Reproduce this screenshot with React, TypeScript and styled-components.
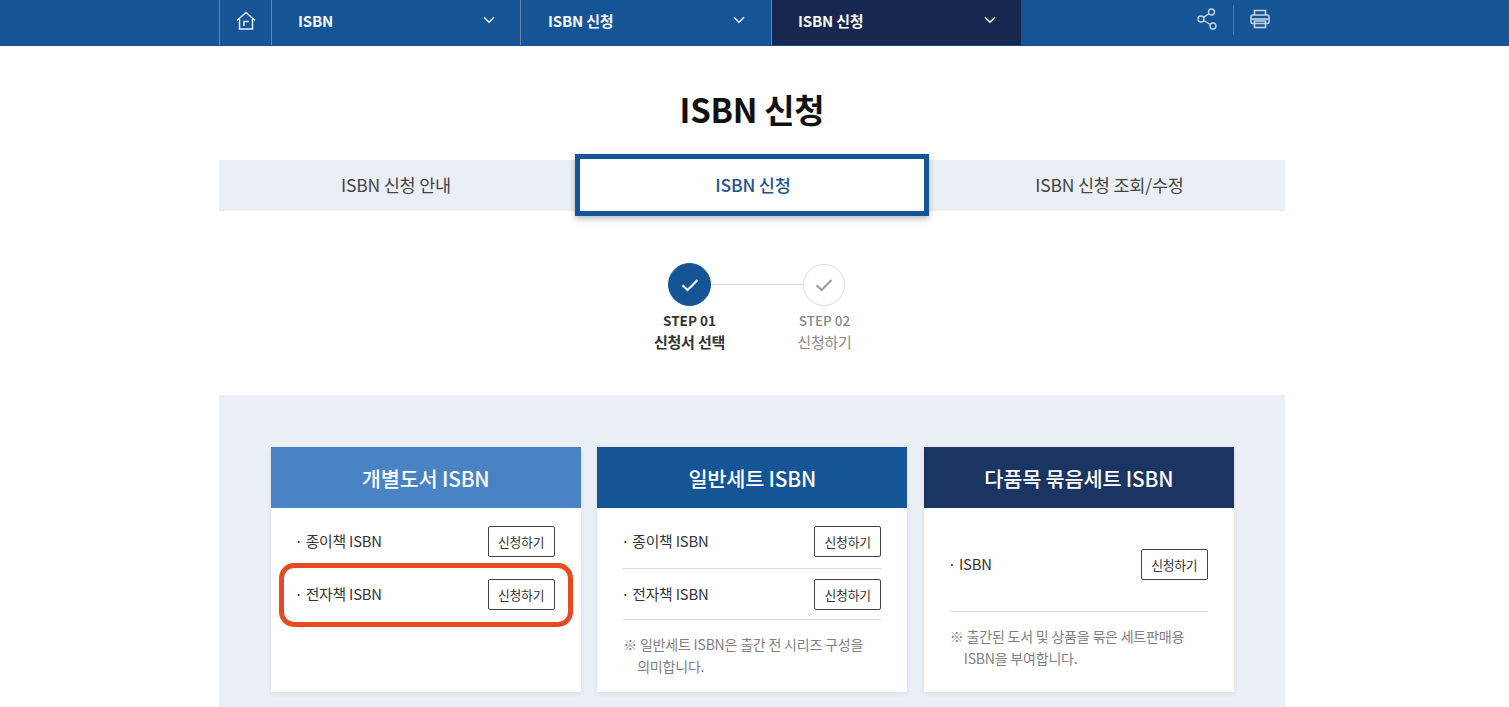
import React from "react";
import styled, { createGlobalStyle } from "styled-components";

const Global = createGlobalStyle`
  html, body { margin: 0; padding: 0; background: #fff; overflow: hidden; }
  body { font-family: "Noto Sans CJK KR", "Noto Sans", sans-serif; color: #333; }
  * { box-sizing: border-box; }
`;

const Page = styled.div`
  width: 1509px;
  height: 707px;
  overflow: hidden;
`;
const Nav = styled.header`
  height: 46px;
  background: #155596;
  border-bottom: 1px solid #14508e;
`;
const Wrap = styled.div`
  width: 1066px;
  margin-left: 219px;
`;
const NavInner = styled(Wrap)`
  display: flex;
  height: 45px;
`;
const HomeCell = styled.div`
  width: 53px;
  display: flex;
  align-items: center;
  justify-content: center;
  border-left: 1px solid #5f88b6;
  border-right: 1px solid #5f88b6;
  padding-bottom: 4px;
`;
const NavItem = styled.div<{ $dark?: boolean; $w: number; $pl?: number; $pr?: number }>`
  width: ${(p) => p.$w}px;
  display: flex;
  align-items: center;
  justify-content: space-between;
  padding: 0 ${(p) => p.$pr ?? 25}px 5px ${(p) => p.$pl ?? 26}px;
  font-size: 15px;
  font-weight: 700;
  color: #f4f7fb;
  letter-spacing: -0.2px;
  border-right: ${(p) => (p.$dark ? "none" : "1px solid #5f88b6")};
  background: ${(p) => (p.$dark ? "#17274f" : "transparent")};
`;
const NavChevron = styled.span`
  display: flex;
`;
const NavTools = styled.div`
  flex: 1;
  display: flex;
  align-items: flex-start;
  justify-content: flex-end;
  padding: 5px 15px 0 0;
`;
const ToolDivider = styled.span`
  width: 1px;
  height: 30px;
  margin: 0 16px 0 15px;
  background: #4a79ad;
`;
const Tool = styled.span`
  display: flex;
  height: 28px;
  align-items: center;
`;
const Title = styled.h1`
  margin: 0;
  padding-top: 40px;
  height: 114px;
  font-size: 33px;
  line-height: 46px;
  font-weight: 700;
  text-align: center;
  color: #111;
  letter-spacing: -0.3px;
`;
const Tabs = styled.nav`
  height: 51px;
  background: #eaeef5;
  display: grid;
  grid-template-columns: 356px 354px 356px;
  grid-template-rows: 51px;
`;
const Tab = styled.div<{ $active?: boolean; $pl?: number; $pr?: number }>`
  display: flex;
  align-items: center;
  justify-content: center;
  font-size: 17.5px;
  letter-spacing: -0.2px;
  padding: 0 ${(p) => p.$pr ?? 0}px 2px ${(p) => p.$pl ?? 0}px;
  color: ${(p) => (p.$active ? "#1c5593" : "#444")};
  font-weight: ${(p) => (p.$active ? 500 : 400)};
  ${(p) =>
    p.$active
      ? `background:#fff;border:5px solid #155596;height:62px;margin-top:-6px;box-shadow:0 3px 6px rgba(0,0,0,.25);position:relative;`
      : ""}
`;
const Stepper = styled.div`
  display: flex;
  justify-content: center;
  height: 184px;
  padding: 52px 0 0 10px;
`;
const Step = styled.div<{ $on?: boolean }>`
  width: 135px;
  display: flex;
  flex-direction: column;
  align-items: center;
  color: ${(p) => (p.$on ? "#333" : "#888")};
  position: relative;
`;
const StepLine = styled.span`
  position: absolute;
  left: 67px;
  top: 21px;
  width: 135px;
  height: 1px;
  background: #ddd;
`;
const Circle = styled.span<{ $on?: boolean }>`
  width: ${(p) => (p.$on ? 43 : 42)}px;
  height: ${(p) => (p.$on ? 43 : 42)}px;
  margin: ${(p) => (p.$on ? "0" : "1px 0 0 -2px")};
  border-radius: 50%;
  display: flex;
  align-items: center;
  justify-content: center;
  position: relative;
  background: ${(p) => (p.$on ? "#155596" : "#fff")};
  border: 1px solid ${(p) => (p.$on ? "#155596" : "#ddd")};
`;
const StepNum = styled.span<{ $on?: boolean }>`
  margin-top: 5px;
  font-size: 13.5px;
  line-height: 19px;
  font-weight: ${(p) => (p.$on ? 700 : 500)};
`;
const StepName = styled.span<{ $on?: boolean }>`
  margin-top: 2px;
  font-size: 15px;
  line-height: 20px;
  letter-spacing: -0.2px;
  font-weight: ${(p) => (p.$on ? 700 : 400)};
`;
const Panel = styled.section`
  background: #eaeef5;
  height: 360px;
  padding: 52px 51px 0 51.6px;
  display: grid;
  grid-template-columns: repeat(3, 310px);
  gap: 16.6px;
  align-items: start;
`;
const Card = styled.article`
  height: 245px;
  background: #fff;
  box-shadow: 0 2px 5px rgba(40, 60, 100, 0.08);
  position: relative;
`;
const CardHead = styled.h2<{ $bg: string }>`
  margin: 0;
  height: 61px;
  background: ${(p) => p.$bg};
  color: #fff;
  display: flex;
  align-items: center;
  justify-content: center;
  font-size: 20.8px;
  font-weight: 500;
  letter-spacing: -0.2px;
`;
const CardBody = styled.div<{ $tall?: boolean }>`
  padding: ${(p) => (p.$tall ? "0" : "9px")} 26px 0 26px;
`;
const Row = styled.div<{ $line?: boolean; $h?: number; $pt?: number; $pb?: number }>`
  height: ${(p) => p.$h ?? 51}px;
  padding: ${(p) => p.$pt ?? 0}px 0 ${(p) => p.$pb ?? 0}px;
  display: flex;
  align-items: center;
  justify-content: space-between;
  border-bottom: 1px solid ${(p) => (p.$line ? "#ddd" : "transparent")};
`;
const Label = styled.span`
  font-size: 14.8px;
  color: #333;
  letter-spacing: -0.2px;
  padding-bottom: 2px;
  margin-left: -2px;
  &::before {
    content: "·";
    margin-right: 3px;
  }
`;
const ApplyButton = styled.button`
  width: 67px;
  height: 31px;
  padding: 0;
  border: 1px solid #444;
  border-radius: 2px;
  background: #fff;
  font-family: inherit;
  font-size: 12.8px;
  letter-spacing: -0.2px;
  color: #333;
`;
const Note = styled.p<{ $top: number }>`
  margin: ${(p) => p.$top}px 0 0;
  padding-left: 14px;
  text-indent: -14px;
  font-size: 14px;
  line-height: 22px;
  color: #808080;
  letter-spacing: -0.2px;
  word-break: keep-all;
`;
const Highlight = styled.span`
  position: absolute;
  left: 8.4px;
  top: 116px;
  width: 294px;
  height: 64px;
  border: 5px solid #e64a23;
  border-radius: 15px;
  pointer-events: none;
`;

const Chevron = () => (
  <svg width="12" height="8" viewBox="0 0 12 8" fill="none">
    <path d="M1 1.3 6 6.2l5-4.9" stroke="#f4f7fb" strokeWidth="1.6" />
  </svg>
);
const Check = ({ color }: { color: string }) => (
  <svg width="18" height="14" viewBox="0 0 18 14" fill="none">
    <path d="M1.5 7.2 6.6 12 16.5 2" stroke={color} strokeWidth="2.1" />
  </svg>
);
const HomeIcon = () => (
  <svg width="20" height="20" viewBox="0 0 20 20" fill="none" stroke="#e8eef6" strokeWidth="1.5">
    <path d="M1 9.5 10 1.5l9 8" />
    <path d="M3.5 8v10h13V8" />
    <path d="M8 15v-4.5h5" />
  </svg>
);
const ShareIcon = () => (
  <svg width="21" height="22" viewBox="0 0 21 22" fill="none" stroke="#c3d2e4" strokeWidth="1.4">
    <circle cx="14.5" cy="4" r="3" />
    <circle cx="4" cy="11" r="3" />
    <circle cx="16" cy="18" r="3" />
    <path d="M12 5.7 6.5 9.4M6.6 12.5l6.8 4" />
  </svg>
);
const PrintIcon = () => (
  <svg width="20" height="20" viewBox="0 0 20 20" fill="none" stroke="#c3d2e4" strokeWidth="1.6">
    <path d="M4.5 6V1.5h11V6" />
    <rect x="1" y="6" width="18" height="8.5" rx="1.5" />
    <path d="M1.5 10h17" />
    <rect x="4.5" y="12" width="11" height="6.5" />
  </svg>
);
const NavArrow = () => (
  <NavChevron><Chevron /></NavChevron>
);

const App = () => (
  <Page>
    <Global />
    <Nav>
      <NavInner>
        <HomeCell><HomeIcon /></HomeCell>
        <NavItem $w={249}>ISBN<NavArrow /></NavItem>
        <NavItem $w={251} $pl={27} $pr={26}>ISBN 신청<NavArrow /></NavItem>
        <NavItem $w={249} $dark>ISBN 신청<NavArrow /></NavItem>
        <NavTools>
          <Tool><ShareIcon /></Tool>
          <ToolDivider />
          <Tool><PrintIcon /></Tool>
        </NavTools>
      </NavInner>
    </Nav>
    <Wrap>
      <Title>ISBN 신청</Title>
      <Tabs>
        <Tab $pr={2}>ISBN 신청 안내</Tab>
        <Tab $active $pl={2}>ISBN 신청</Tab>
        <Tab $pl={5}>ISBN 신청 조회/수정</Tab>
      </Tabs>
      <Stepper>
        <Step $on>
          <StepLine />
          <Circle $on><Check color="#fff" /></Circle>
          <StepNum $on>STEP 01</StepNum>
          <StepName $on>신청서 선택</StepName>
        </Step>
        <Step>
          <Circle><Check color="#999" /></Circle>
          <StepNum>STEP 02</StepNum>
          <StepName>신청하기</StepName>
        </Step>
      </Stepper>
      <Panel>
        <Card>
          <CardHead $bg="#4a83c4">개별도서 ISBN</CardHead>
          <CardBody>
            <Row $h={52} $pb={2}><Label>종이책 ISBN</Label><ApplyButton>신청하기</ApplyButton></Row>
            <Row $pt={1}><Label>전자책 ISBN</Label><ApplyButton>신청하기</ApplyButton></Row>
          </CardBody>
          <Highlight />
        </Card>
        <Card>
          <CardHead $bg="#155596">일반세트 ISBN</CardHead>
          <CardBody>
            <Row $line $h={52} $pb={2}><Label>종이책 ISBN</Label><ApplyButton>신청하기</ApplyButton></Row>
            <Row $line $pt={1}><Label>전자책 ISBN</Label><ApplyButton>신청하기</ApplyButton></Row>
            <Note $top={13}>※ 일반세트 ISBN은 출간 전 시리즈 구성을 의미합니다.</Note>
          </CardBody>
        </Card>
        <Card>
          <CardHead $bg="#1b3563">다품목 묶음세트 ISBN</CardHead>
          <CardBody $tall>
            <Row $line $h={104} $pt={10}><Label>ISBN</Label><ApplyButton>신청하기</ApplyButton></Row>
            <Note $top={13}>※ 출간된 도서 및 상품을 묶은 세트판매용 ISBN을 부여합니다.</Note>
          </CardBody>
        </Card>
      </Panel>
    </Wrap>
  </Page>
);

export default App;
